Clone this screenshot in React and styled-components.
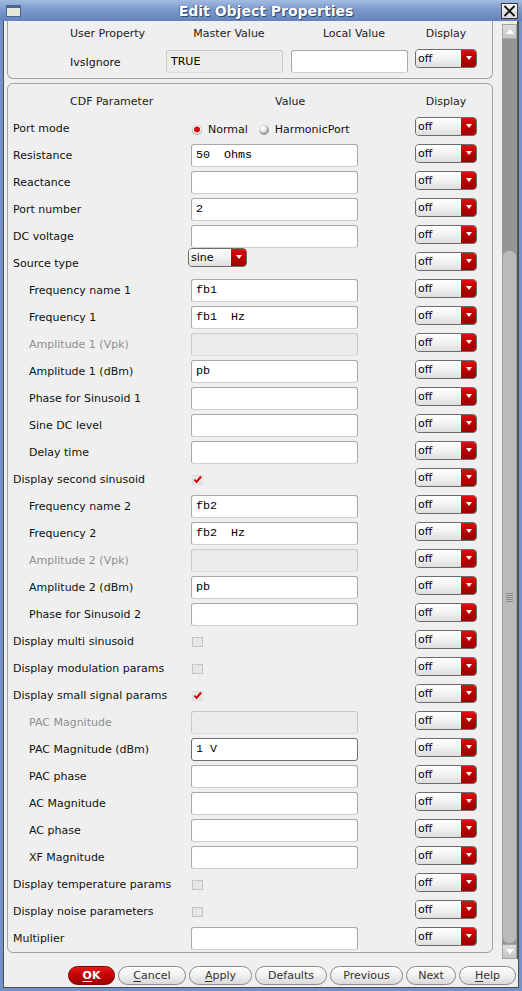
import React from 'react'
import styled, { createGlobalStyle } from 'styled-components'

const Global = createGlobalStyle`
  html, body {
    margin: 0;
    padding: 0;
    background: #efefef;
  }
  body {
    font-family: "DejaVu Sans", "Liberation Sans", sans-serif;
    font-size: 11px;
    color: #111;
  }
`

const Window = styled.div`
  width: 522px;
  height: 991px;
  display: flex;
  flex-direction: column;
  overflow: hidden;
`

const TitleBar = styled.div`
  height: 21px;
  flex: none;
  display: flex;
  align-items: center;
  background: linear-gradient(#a3bbe2, #7c99cb 45%, #6283bc);
`

const WinIcon = styled.div`
  width: 15px;
  height: 12px;
  margin-left: 6px;
  box-sizing: border-box;
  border: 1px solid #4a6596;
  border-top-width: 3px;
  background: #e4e6da;
`

const Title = styled.div`
  flex: 1;
  text-align: center;
  padding-left: 10px;
  font-weight: bold;
  font-size: 14px;
  color: #fff;
  text-shadow: 1px 1px 0 #34496f, -1px 0 0 #4b6597;
`

const CloseBtn = styled.div`
  width: 17px;
  height: 16px;
  margin-right: 4px;
  box-sizing: border-box;
  border: 1px solid #3a3a3a;
  background: linear-gradient(#f4f4f4, #d8d8d8);
  display: flex;
  align-items: center;
  justify-content: center;
`

const Body = styled.div`
  flex: 1;
  display: flex;
  flex-direction: column;
  border: 3px solid #7393c8;
  border-top: 0;
  min-height: 0;
`

const Inner = styled.div`
  flex: 1;
  display: flex;
  flex-direction: column;
  border: 1px solid #4d4d4d;
  border-top: 0;
  background: #efefef;
  min-height: 0;
`

const Main = styled.div`
  height: 938px;
  flex: none;
  display: flex;
`

const Viewport = styled.div`
  flex: 1;
  overflow: hidden;
  padding-left: 3px;
`

const Frame = styled.div`
  width: 486px;
  box-sizing: border-box;
  border: 1px solid #a2a2a2;
  border-radius: 6px;
  padding: 0 15px 0 5px;
  margin-top: ${p => p.$mt || 0}px;
  ${p => p.$cut && `
    border-top: 0;
    border-top-left-radius: 0;
    border-top-right-radius: 0;
  `}
`

const TopGrid = styled.div`
  display: grid;
  grid-template-columns: 153px 125px 124px 62px;
  grid-template-rows: 26px 31px;
  align-items: start;
`

const HeadCell = styled.div`
  line-height: 26px;
  text-align: ${p => p.$left ? 'left' : 'center'};
  padding-left: ${p => p.$pl || 0}px;
  width: ${p => p.$w ? `${p.$w}px` : 'auto'};
  box-sizing: border-box;
  color: #222;
`

const TopLabel = styled.div`
  padding-left: 57px;
  line-height: 23px;
  margin-top: 4px;
`

const CdfHead = styled.div`
  display: flex;
  height: 31px;
  padding-top: 11px;
  box-sizing: border-box;
  line-height: 14px;
  color: #222;
`

const HeadText = styled.div`
  width: ${p => p.$w}px;
  padding-left: ${p => p.$pl || 0}px;
  text-align: ${p => p.$center ? 'center' : 'left'};
  box-sizing: border-box;
  flex: none;
`

const Row = styled.div`
  display: flex;
  align-items: flex-start;
  height: 27px;
`

const Label = styled.div`
  width: 178px;
  flex: none;
  box-sizing: border-box;
  padding-left: ${p => p.$indent ? 16 : 0}px;
  line-height: 23px;
  margin-top: 2px;
  white-space: nowrap;
  color: ${p => p.$dim ? '#8e8e8e' : '#111'};
`

const ValueCell = styled.div`
  width: 167px;
  flex: none;
  display: flex;
  align-items: center;
  height: 27px;
`

const Spacer = styled.div`
  flex: 1;
`

const Field = styled.div`
  width: ${p => p.$w || 167}px;
  height: 23px;
  margin-top: ${p => p.$mt ?? 2}px;
  align-self: flex-start;
  box-sizing: border-box;
  border: 1px solid ${p => p.$focus ? '#6e6e6e' : p.$off ? '#c9c9c9' : '#a9a9a9'};
  border-bottom-color: ${p => p.$focus ? '#6e6e6e' : p.$off ? '#dcdcdc' : '#cfcfcf'};
  border-radius: 3px;
  background: ${p => p.$off ? '#ececec' : '#fff'};
  padding-left: 4px;
  font-family: ${p => p.$sans ? '"DejaVu Sans", sans-serif' : '"Liberation Mono", "DejaVu Sans Mono", monospace'};
  font-size: ${p => p.$sans ? 11 : 11.7}px;
  line-height: 21px;
  white-space: pre;
  color: #000;
`

const Combo = styled.div`
  width: ${p => p.$w || 62}px;
  height: 19px;
  flex: none;
  margin-top: ${p => p.$mt ?? 2}px;
  margin-left: ${p => p.$ml || 0}px;
  align-self: flex-start;
  display: flex;
  box-sizing: border-box;
  border: 1px solid #6c6c6c;
  border-radius: 4px;
  overflow: hidden;
`

const ComboText = styled.span`
  flex: 1;
  background: linear-gradient(#ffffff, #f2f2f2 50%, #dedede);
  padding-left: 2px;
  line-height: 17px;
  font-size: 11px;
  color: #000;
`

const ComboArrow = styled.span`
  width: 15px;
  flex: none;
  background: linear-gradient(#dc1010, #b80000 50%, #9c0000);
  display: flex;
  justify-content: center;
  padding-top: 6px;
  box-sizing: border-box;

  &::after {
    content: "";
    width: 0;
    height: 0;
    border-left: 3px solid transparent;
    border-right: 3px solid transparent;
    border-top: 4px solid #fff;
  }
`

const RadioGroup = styled.div`
  display: flex;
  align-items: center;
  gap: 11px;
  margin-top: 2px;
  margin-left: 1px;
`

const RadioOpt = styled.label`
  display: flex;
  align-items: center;
  gap: 6px;
  white-space: nowrap;
`

const RadioDot = styled.span`
  width: 10px;
  height: 10px;
  border-radius: 50%;
  flex: none;
  background: ${p => p.$on
    ? 'radial-gradient(circle at 50% 45%, #e00000 0 2.6px, #ffffff 3.4px, #d6d6d6 4.4px, #a0a0a0 5px)'
    : 'radial-gradient(circle at 40% 35%, #ffffff 0 1px, #dadada 3.5px, #b4b4b4 4.6px, #9a9a9a 5px)'};
`

const CheckWrap = styled.span`
  display: flex;
  margin-left: 1px;
`

const Bar = styled.div`
  width: 16px;
  flex: none;
  display: flex;
  flex-direction: column;
  padding-top: 3px;
  box-sizing: border-box;
  border-right: 1px solid #5a5a5a;
`

const ArrowBtn = styled.div`
  height: 15px;
  flex: none;
  box-sizing: border-box;
  border: 1px solid #a4a4a4;
  background: linear-gradient(#dcdcdc, #c6c6c6);
  display: flex;
  align-items: center;
  justify-content: center;

  &::after {
    content: "";
    border-left: 4px solid transparent;
    border-right: 4px solid transparent;
    ${p => p.$down ? 'border-top: 5px solid #fff;' : 'border-bottom: 5px solid #fff;'}
  }
`

const Track = styled.div`
  flex: 1;
  display: flex;
  flex-direction: column;
  background: #959595;
`

const Thumb = styled.div`
  flex: 1;
  margin-top: ${p => p.$top}px;
  background: #bababa;
  border: 1px solid #9a9a9a;
  border-radius: 7px;
  display: flex;
  align-items: center;
  justify-content: center;
`

const Grip = styled.div`
  width: 7px;
  height: 9px;
  background: repeating-linear-gradient(#8a8a8a 0 1px, transparent 1px 2px);
`

const ButtonBar = styled.div`
  flex: 1;
  display: flex;
  justify-content: flex-end;
  align-items: flex-start;
  gap: 3px;
  padding: 7px 2px 0 0;
`

const Btn = styled.button`
  width: ${p => p.$w}px;
  height: 19px;
  padding: 0;
  border-radius: 10px;
  border: 1px solid ${p => p.$primary ? '#7a0000' : '#8c8c8c'};
  background: ${p => p.$primary
    ? 'linear-gradient(#e41c1c, #c30000 50%, #a10000)'
    : 'linear-gradient(#ffffff, #f0f0f0 50%, #d9d9d9)'};
  color: ${p => p.$primary ? '#fff' : '#333'};
  font-family: "DejaVu Sans", sans-serif;
  font-size: 11px;
  font-weight: ${p => p.$primary ? 'bold' : 'normal'};
  line-height: 17px;

  u {
    text-decoration: underline;
    text-underline-offset: 2px;
  }
`

const Check = ({ on }) => (
  <CheckWrap>
    <svg width="11" height="10" viewBox="0 0 11 10">
      <rect x="0.5" y="0.5" width="10" height="9" fill="#e6e6e6" stroke={on ? '#dedede' : '#c4c4c4'} />
      {on && <path d="M2.5 4.5 L4.5 7 L9 1.5" fill="none" stroke="#d40000" strokeWidth="2" />}
    </svg>
  </CheckWrap>
)

const Display = () => (
  <Combo>
    <ComboText>off</ComboText>
    <ComboArrow />
  </Combo>
)

const rows = [
  { label: 'Port mode', kind: 'radio' },
  { label: 'Resistance', value: '50  Ohms' },
  { label: 'Reactance' },
  { label: 'Port number', value: '2' },
  { label: 'DC voltage' },
  { label: 'Source type', kind: 'select', value: 'sine' },
  { label: 'Frequency name 1', indent: true, value: 'fb1' },
  { label: 'Frequency 1', indent: true, value: 'fb1  Hz' },
  { label: 'Amplitude 1 (Vpk)', indent: true, off: true },
  { label: 'Amplitude 1 (dBm)', indent: true, value: 'pb' },
  { label: 'Phase for Sinusoid 1', indent: true },
  { label: 'Sine DC level', indent: true },
  { label: 'Delay time', indent: true },
  { label: 'Display second sinusoid', kind: 'check', on: true },
  { label: 'Frequency name 2', indent: true, value: 'fb2' },
  { label: 'Frequency 2', indent: true, value: 'fb2  Hz' },
  { label: 'Amplitude 2 (Vpk)', indent: true, off: true },
  { label: 'Amplitude 2 (dBm)', indent: true, value: 'pb' },
  { label: 'Phase for Sinusoid 2', indent: true },
  { label: 'Display multi sinusoid', kind: 'check' },
  { label: 'Display modulation params', kind: 'check' },
  { label: 'Display small signal params', kind: 'check', on: true },
  { label: 'PAC Magnitude', indent: true, off: true },
  { label: 'PAC Magnitude (dBm)', indent: true, value: '1 V', focus: true },
  { label: 'PAC phase', indent: true },
  { label: 'AC Magnitude', indent: true },
  { label: 'AC phase', indent: true },
  { label: 'XF Magnitude', indent: true },
  { label: 'Display temperature params', kind: 'check' },
  { label: 'Display noise parameters', kind: 'check' },
  { label: 'Multiplier' },
]

const renderValue = (row) => {
  if (row.kind === 'radio') {
    return (
      <RadioGroup>
        <RadioOpt><RadioDot $on />Normal</RadioOpt>
        <RadioOpt><RadioDot />HarmonicPort</RadioOpt>
      </RadioGroup>
    )
  }
  if (row.kind === 'select') {
    return (
      <Combo $w={59} $mt={-2} $ml={-3}>
        <ComboText>{row.value}</ComboText>
        <ComboArrow />
      </Combo>
    )
  }
  if (row.kind === 'check') return <Check on={row.on} />
  return <Field $off={row.off} $focus={row.focus}>{row.value || ''}</Field>
}

export default function App() {
  return (
    <Window>
      <Global />
      <TitleBar>
        <WinIcon />
        <Title>Edit Object Properties</Title>
        <CloseBtn>
          <svg width="13" height="12" viewBox="0 0 13 12">
            <path d="M1.5 1 L11.5 11 M11.5 1 L1.5 11" stroke="#111" strokeWidth="1.8" />
          </svg>
        </CloseBtn>
      </TitleBar>
      <Body>
        <Inner>
          <Main>
            <Viewport>
              <Frame $cut>
                <TopGrid>
                  <HeadCell $left $pl={57}>User Property</HeadCell>
                  <HeadCell $w={117} $pl={9}>Master Value</HeadCell>
                  <HeadCell $w={117} $pl={9}>Local Value</HeadCell>
                  <HeadCell>Display</HeadCell>
                  <TopLabel>IvsIgnore</TopLabel>
                  <Field $w={117} $mt={3} $off $sans>TRUE</Field>
                  <Field $w={117} $mt={3} />
                  <Display />
                </TopGrid>
              </Frame>
              <Frame $mt={4}>
                <CdfHead>
                  <HeadText $w={178} $pl={57}>CDF Parameter</HeadText>
                  <HeadText $w={167} $pl={84}>Value</HeadText>
                  <Spacer />
                  <HeadText $w={62} $center>Display</HeadText>
                </CdfHead>
                {rows.map(row => (
                  <Row key={row.label}>
                    <Label $indent={row.indent} $dim={row.off}>{row.label}</Label>
                    <ValueCell>{renderValue(row)}</ValueCell>
                    <Spacer />
                    <Display />
                  </Row>
                ))}
              </Frame>
            </Viewport>
            <Bar>
              <ArrowBtn />
              <Track>
                <Thumb $top={211}><Grip /></Thumb>
              </Track>
              <ArrowBtn $down />
            </Bar>
          </Main>
          <ButtonBar>
            <Btn $w={47} $primary><u>O</u>K</Btn>
            <Btn $w={68}><u>C</u>ancel</Btn>
            <Btn $w={63}><u>A</u>pply</Btn>
            <Btn $w={72}>Defaults</Btn>
            <Btn $w={73}>Previous</Btn>
            <Btn $w={50}>Next</Btn>
            <Btn $w={57}><u>H</u>elp</Btn>
          </ButtonBar>
        </Inner>
      </Body>
    </Window>
  )
}
